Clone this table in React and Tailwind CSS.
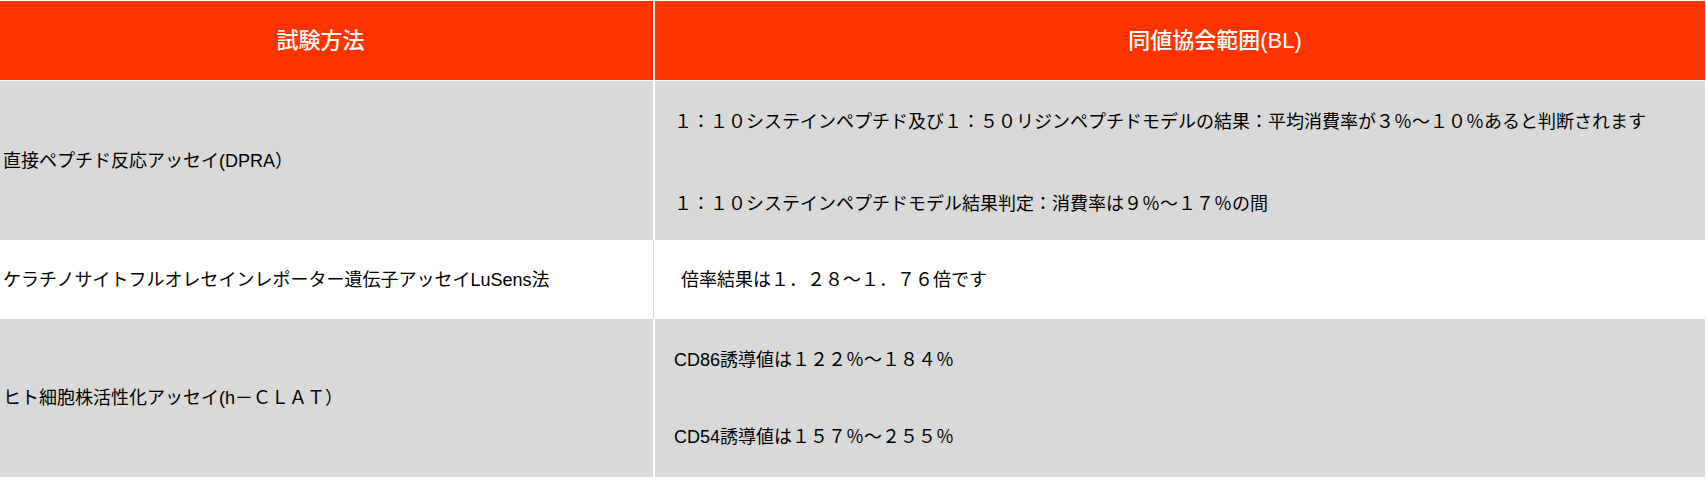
export default function App() {
  return (
    <div className="w-[1705px] bg-white pt-px font-['Liberation_Sans','Noto_Sans_CJK_JP',sans-serif] text-[18px] leading-[24px] text-black">
      {/* header */}
      <div className="grid grid-cols-[653px_1fr] gap-x-[2px]">
        <div className="flex h-[79px] items-center justify-center bg-[#ff3300] text-[22px] font-medium text-white">
          <span className="mr-[12px]">試験方法</span>
        </div>
        <div className="flex h-[79px] items-center justify-center bg-[#ff3300] text-[22px] font-medium text-white">
          <span className="ml-[70px]">同値協会範囲(BL)</span>
        </div>
      </div>

      {/* DPRA */}
      <div className="mt-px grid grid-cols-[653px_1fr] gap-x-[2px]">
        <div className="flex h-[159px] items-center bg-[#d9d9d9] pl-[3px]">
          直接ペプチド反応アッセイ(DPRA）
        </div>
        <div className="flex h-[159px] flex-col gap-[58px] bg-[#d9d9d9] pl-[19px] pt-[29px]">
          <p>１：１０システインペプチド及び１：５０リジンペプチドモデルの結果：平均消費率が３％～１０％あると判断されます</p>
          <p>１：１０システインペプチドモデル結果判定：消費率は９％～１７％の間</p>
        </div>
      </div>

      {/* LuSens */}
      <div className="grid grid-cols-[653px_1fr] gap-x-[2px]">
        <div className="flex h-[79px] items-center bg-white pl-[3px] shadow-[1px_0_0_#dcdcdc]">
          ケラチノサイトフルオレセインレポーター遺伝子アッセイLuSens法
        </div>
        <div className="flex h-[79px] items-center bg-white pl-[26px]">
          倍率結果は１．２８～１．７６倍です
        </div>
      </div>

      {/* h-CLAT */}
      <div className="grid grid-cols-[653px_1fr] gap-x-[2px]">
        <div className="flex h-[158px] items-center bg-[#d9d9d9] pl-[3px]">
          ヒト細胞株活性化アッセイ(h－ＣＬＡＴ）
        </div>
        <div className="flex h-[158px] flex-col gap-[53px] bg-[#d9d9d9] pl-[19px] pt-[29px]">
          <p>CD86誘導値は１２２％～１８４％</p>
          <p>CD54誘導値は１５７％～２５５％</p>
        </div>
      </div>
    </div>
  );
}
